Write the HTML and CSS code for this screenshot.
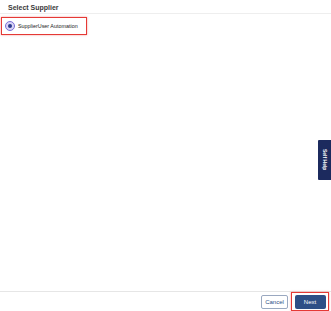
FILE: index.html
```html
<!DOCTYPE html>
<html lang="en">

<head>
    <meta charset="UTF-8">
    <title>Select Supplier</title>
    <link rel="stylesheet" href="styles.css">
</head>

<body>
    <div class="page">
        <div class="head">Select Supplier</div>

        <div class="list">
            <label class="opt">
                <span class="radio"><span class="dot"></span></span>
                <span class="opt-text">SupplierUser Automation</span>
            </label>
        </div>

        <div class="foot">
            <button class="btn cancel">Cancel</button>
            <span class="next-wrap"><button class="btn next">Next</button></span>
        </div>
    </div>

    <div class="help">Self Help</div>
</body>

</html>
```

FILE: styles.css
```css
body {
    margin: 0;
    font-family: "Liberation Sans", Arial, sans-serif;
    background: #fff;
}

.page {
    width: 331px;
    height: 311px;
    display: flex;
    flex-direction: column;
}

.head {
    height: 14px;
    box-sizing: border-box;
    padding: 4px 0 0 8px;
    font-size: 7px;
    font-weight: bold;
    color: #3a3a3a;
    border-bottom: 1px solid #eee;
}

.list {
    flex: 1;
}

.opt {
    display: inline-flex;
    align-items: center;
    width: 86px;
    height: 18px;
    box-sizing: border-box;
    margin-left: 1px;
    padding-left: 3px;
    white-space: nowrap;
    border: 1px solid #e53935;
    box-shadow: 0 0 2px rgba(229, 57, 53, 0.5);
}

.radio {
    flex: none;
    width: 8px;
    height: 8px;
    border-radius: 50%;
    border: 1px solid #7b6fd6;
    background: #d8d3f5;
    display: flex;
    align-items: center;
    justify-content: center;
}

.dot {
    width: 4px;
    height: 4px;
    border-radius: 50%;
    background: #2b3a8c;
}

.opt-text {
    margin-left: 3px;
    font-size: 5.4px;
    color: #222;
}

.foot {
    height: 19px;
    border-top: 1px solid #e6e6e6;
    display: flex;
    justify-content: flex-end;
    align-items: center;
    padding-right: 2px;
}

.btn {
    height: 14px;
    padding: 0;
    font-family: "Liberation Sans", Arial, sans-serif;
    font-size: 6px;
    border-radius: 2px;
}

.cancel {
    width: 27px;
    background: #fff;
    color: #2d4f86;
    border: 1px solid #9aa8c0;
    margin-right: 3px;
}

.next-wrap {
    display: flex;
    align-items: center;
    justify-content: center;
    width: 38px;
    height: 19px;
    box-sizing: border-box;
    border: 1px solid #e53935;
    box-shadow: 0 0 2px rgba(229, 57, 53, 0.5);
}

.next {
    width: 31px;
    background: #2d4f86;
    color: #fff;
    border: none;
}

.help {
    position: absolute;
    top: 140px;
    right: 0;
    width: 13px;
    height: 40px;
    background: #1c2a5e;
    color: #fff;
    font-size: 5px;
    font-weight: bold;
    writing-mode: vertical-rl;
    display: flex;
    align-items: center;
    justify-content: center;
    border-radius: 1px 0 0 1px;
}
```
